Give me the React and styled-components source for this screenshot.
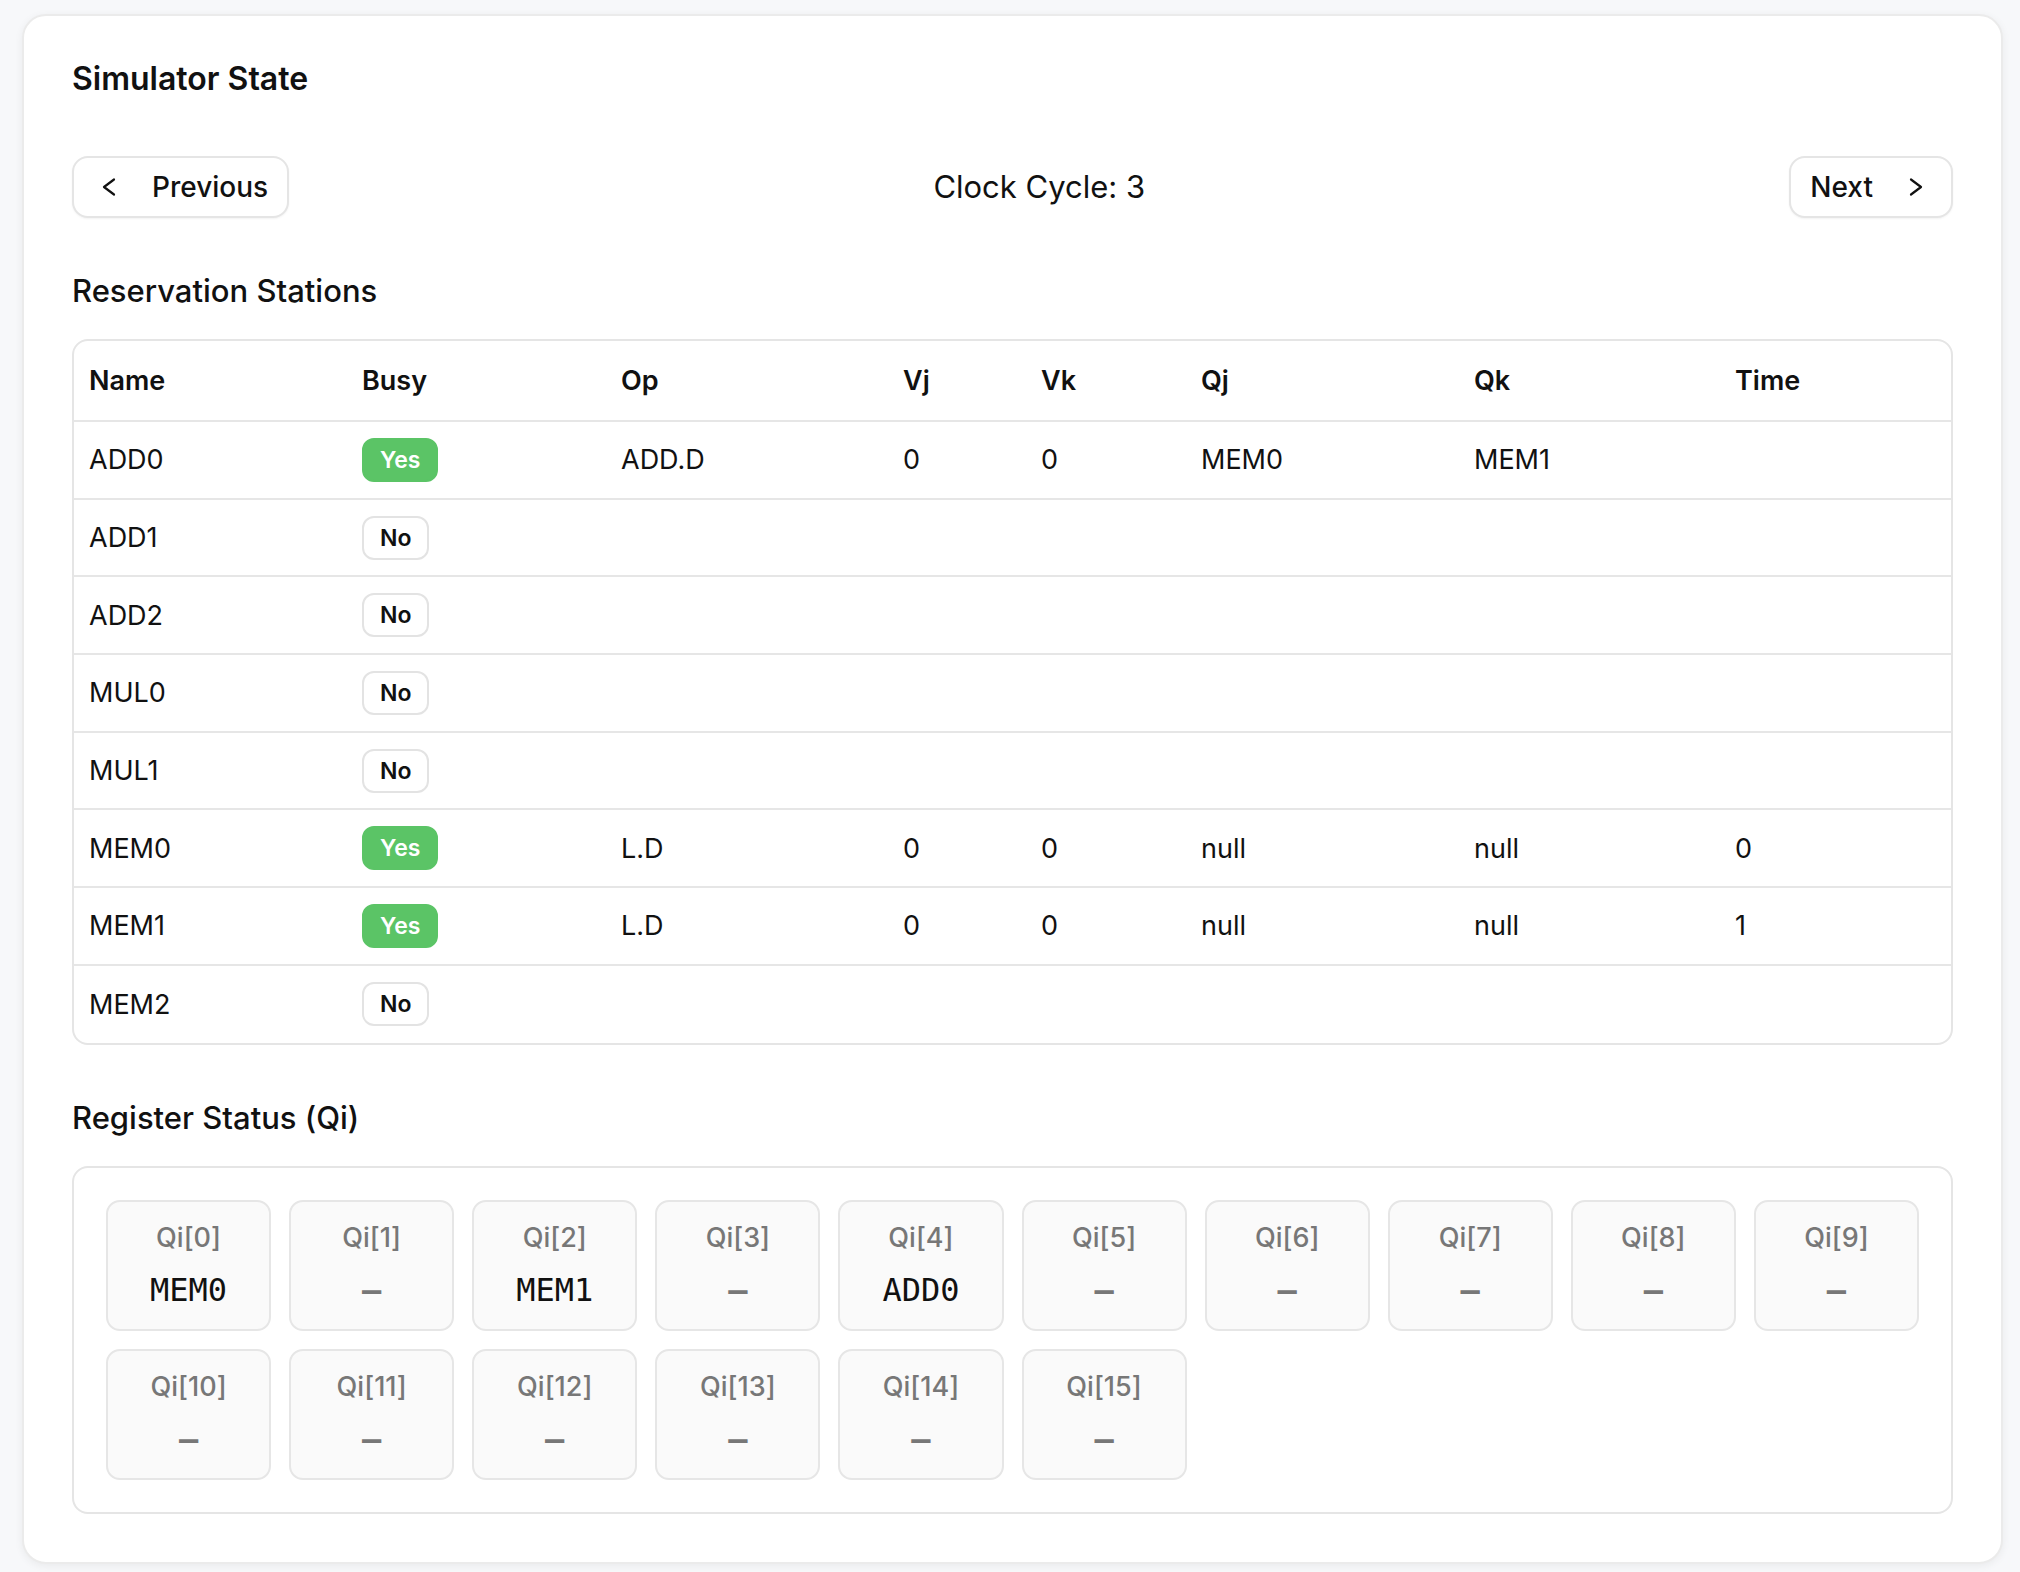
import React from "react";
import styled, { createGlobalStyle } from "styled-components";

const stations = [
  { name: "ADD0", busy: true, op: "ADD.D", vj: "0", vk: "0", qj: "MEM0", qk: "MEM1", time: "" },
  { name: "ADD1", busy: false },
  { name: "ADD2", busy: false },
  { name: "MUL0", busy: false },
  { name: "MUL1", busy: false },
  { name: "MEM0", busy: true, op: "L.D", vj: "0", vk: "0", qj: "null", qk: "null", time: "0" },
  { name: "MEM1", busy: true, op: "L.D", vj: "0", vk: "0", qj: "null", qk: "null", time: "1" },
  { name: "MEM2", busy: false },
];

const columns = [
  { key: "name", label: "Name", width: 273 },
  { key: "busy", label: "Busy", width: 259 },
  { key: "op", label: "Op", width: 282 },
  { key: "vj", label: "Vj", width: 138 },
  { key: "vk", label: "Vk", width: 160 },
  { key: "qj", label: "Qj", width: 273 },
  { key: "qk", label: "Qk", width: 261 },
  { key: "time", label: "Time", width: 232 },
];

const registers = Array.from({ length: 16 }, (_, i) =>
  i === 0 ? "MEM0" : i === 2 ? "MEM1" : i === 4 ? "ADD0" : null
);

function Chevron({ dir }) {
  return (
    <svg width="32" height="32" viewBox="0 0 32 32" fill="none">
      <path
        d={dir === "left" ? "M21 8.5L11 16l10 7.5" : "M11 8.5L21 16l-10 7.5"}
        stroke="#111"
        strokeWidth="2.2"
        strokeLinecap="round"
        strokeLinejoin="round"
      />
    </svg>
  );
}

function App() {
  return (
    <Page>
      <GlobalStyle />
      <Card>
        <Title>Simulator State</Title>

        <Toolbar>
          <NavButton>
            <Chevron dir="left" />
            Previous
          </NavButton>
          <ClockLabel>Clock Cycle: 3</ClockLabel>
          <NavButton>
            Next
            <Chevron dir="right" />
          </NavButton>
        </Toolbar>

        <SectionTitle>Reservation Stations</SectionTitle>
        <TableFrame>
          <Table>
            <colgroup>
              {columns.map((c) => (
                <Col key={c.key} $w={c.width} />
              ))}
            </colgroup>
            <thead>
              <Row>
                {columns.map((c) => (
                  <Th key={c.key}>{c.label}</Th>
                ))}
              </Row>
            </thead>
            <tbody>
              {stations.map((s) => (
                <Row key={s.name}>
                  <Td>{s.name}</Td>
                  <Td>
                    <Badge $busy={s.busy}>{s.busy ? "Yes" : "No"}</Badge>
                  </Td>
                  <Td>{s.op}</Td>
                  <Td>{s.vj}</Td>
                  <Td>{s.vk}</Td>
                  <Td>{s.qj}</Td>
                  <Td>{s.qk}</Td>
                  <Td>{s.time}</Td>
                </Row>
              ))}
            </tbody>
          </Table>
        </TableFrame>

        <SectionTitle>Register Status (Qi)</SectionTitle>
        <RegisterGrid>
          {registers.map((r, i) => (
            <RegisterCell key={i}>
              <RegisterLabel>Qi[{i}]</RegisterLabel>
              <RegisterValue $empty={!r}>{r || "—"}</RegisterValue>
            </RegisterCell>
          ))}
        </RegisterGrid>
      </Card>
    </Page>
  );
}

// ==== STYLED COMPONENT ====
const GlobalStyle = createGlobalStyle`
  * { box-sizing: border-box; }
  html, body {
    margin: 0;
    background: #f7f8fa;
  }
  body {
    font-family: Inter, "Noto Sans", sans-serif;
    color: #111;
  }
`;

const Page = styled.div`
  padding: 14px 17px 9px 22px;
`;

const Card = styled.section`
  background: #fff;
  border: 2px solid #ebebeb;
  border-radius: 24px;
  padding: 43px 48px 48px;
  box-shadow: 0 2px 8px rgba(0, 0, 0, 0.06);
`;

const Title = styled.h2`
  margin: 0;
  font-size: 32px;
  line-height: 40px;
  font-weight: 600;
`;

const Toolbar = styled.div`
  margin-top: 57px;
  display: flex;
  align-items: center;
  justify-content: space-between;
`;

const NavButton = styled.button`
  height: 62px;
  display: inline-flex;
  align-items: center;
  gap: 27px;
  padding: 0 19px;
  background: #fff;
  border: 2px solid #e5e5e5;
  border-radius: 16px;
  box-shadow: 0 1px 2px rgba(0, 0, 0, 0.05);
  font-family: Inter, sans-serif;
  font-size: 28px;
  font-weight: 500;
  color: #111;
  cursor: pointer;
`;

const ClockLabel = styled.div`
  font-size: 31px;
  line-height: 40px;
`;

const SectionTitle = styled.h3`
  margin: 53px 0 28px;
  font-size: 31px;
  line-height: 40px;
  font-weight: 500;
`;

const TableFrame = styled.div`
  border: 2px solid #e5e5e5;
  border-radius: 16px;
  overflow: hidden;
`;

const Table = styled.table`
  width: 100%;
  border-collapse: collapse;
  table-layout: fixed;
`;

const Col = styled.col`
  width: ${(p) => p.$w}px;
`;

const Row = styled.tr`
  border-bottom: 2px solid #e6e6e6;

  tbody &:last-child {
    border-bottom: none;
  }
`;

const Th = styled.th`
  height: 80px;
  padding: 0 15px;
  text-align: left;
  font-size: 27px;
  font-weight: 600;
`;

const Td = styled.td`
  height: 77.7px;
  padding: 0 15px;
  font-size: 27px;
  font-weight: 400;
`;

const Badge = styled.span`
  display: inline-flex;
  align-items: center;
  height: 44px;
  padding: 0 16px;
  border-radius: 12px;
  font-size: 23px;
  font-weight: 600;
  border: 2px solid ${(p) => (p.$busy ? "#5bc466" : "#e3e3e3")};
  background: ${(p) => (p.$busy ? "#5bc466" : "#fff")};
  color: ${(p) => (p.$busy ? "#fff" : "#111")};
`;

const RegisterGrid = styled.div`
  border: 2px solid #e5e5e5;
  border-radius: 16px;
  padding: 32px;
  display: grid;
  grid-template-columns: repeat(10, 1fr);
  gap: 18px;
`;

const RegisterCell = styled.div`
  height: 131px;
  background: #fafafa;
  border: 2px solid #e6e6e6;
  border-radius: 14px;
  display: flex;
  flex-direction: column;
  align-items: center;
  padding-top: 18px;
  gap: 14px;
`;

const RegisterLabel = styled.div`
  font-size: 27px;
  line-height: 36px;
  font-weight: 500;
  color: #777;
`;

const RegisterValue = styled.div`
  font-family: "DejaVu Sans Mono", "Liberation Mono", monospace;
  font-size: 32px;
  line-height: 40px;
  font-weight: ${(p) => (p.$empty ? 700 : 400)};
  color: ${(p) => (p.$empty ? "#777" : "#111")};
`;

export default App;
